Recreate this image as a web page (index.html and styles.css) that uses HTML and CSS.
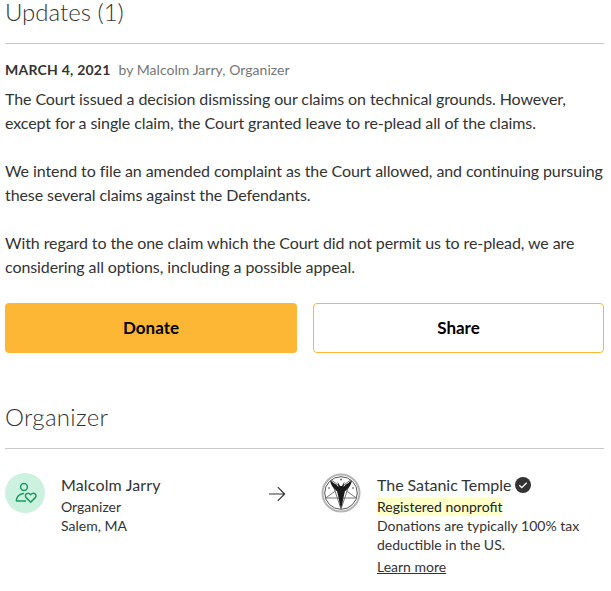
FILE: index.html
```html
<!DOCTYPE html>
<html lang="en">
<head>
<meta charset="utf-8">
<title>Updates</title>
<link rel="stylesheet" href="styles.css">
</head>
<body>
<main class="page">
  <h2 class="heading updates-heading">Updates (1)</h2>
  <div class="update-meta"><strong class="date">MARCH 4, 2021</strong><span class="by">by Malcolm Jarry, Organizer</span></div>
  <div class="update-body">
    <p>The Court issued a decision dismissing our claims on technical grounds. However, except for a single claim, the Court granted leave to re-plead all of the claims.</p>
    <p>We intend to file an amended complaint as the Court allowed, and continuing pursuing these several claims against the Defendants.</p>
    <p>With regard to the one claim which the Court did not permit us to re-plead, we are considering all options, including a possible appeal.</p>
  </div>
  <div class="actions">
    <a class="btn btn-primary">Donate</a>
    <a class="btn btn-secondary">Share</a>
  </div>
  <h2 class="heading organizer-heading">Organizer</h2>
  <section class="organizer">
    <div class="person">
      <div class="avatar">
        <svg width="22" height="22" viewBox="0 0 22 22" fill="none" stroke="#1b9a62" stroke-width="1.5" stroke-linecap="round" stroke-linejoin="round">
          <circle cx="9" cy="5" r="3.4"/>
          <path d="M10.5 19H2.2c-.6 0-1-.5-.8-1.1C2 14.500 4.700 12 8.500 11.500"/>
          <path d="M15.700 20.200l-4.300-4.300c-1.300-1.300-1.300-3 0-4 1.200-.9 2.900-.7 4.300.9 1.400-1.600 3.100-1.800 4.300-.9 1.300 1 1.300 2.700 0 4z"/>
        </svg>
      </div>
      <div class="info">
        <div class="name name-person">Malcolm Jarry</div>
        <div class="small">Organizer</div>
        <div class="small">Salem, MA</div>
      </div>
    </div>
    <div class="arrow">
      <svg width="18" height="16" viewBox="0 0 18 16" fill="none" stroke="#333" stroke-width="1.2">
        <path d="M1 8h15.500M9.800 1.200 16.600 8l-6.800 6.800"/>
      </svg>
    </div>
    <div class="person charity">
      <div class="logo">
        <svg width="40" height="40" viewBox="0 0 40 40">
          <circle cx="20" cy="20" r="18.500" fill="#fff" stroke="#b5b5b5" stroke-width="2"/>
          <circle cx="20" cy="20" r="16.300" fill="none" stroke="#555" stroke-width="1"/>
          <path d="M20 36 10.300 7 35.300 25H4.700L29.700 7z" fill="none" stroke="#777" stroke-width="1"/>
          <path d="M9 7.500c3 2.500 6 3 8.500 6.500L16.500 8.500l2.500 4.500h2l2.500-4.500-1 5.500C25 10.500 28 10 31 7.500c-1 5-3.500 8-7 10.500l-1.200 5-1.800 9-1 3.500-1-3.500-1.800-9-1.200-5C12.500 15.500 10 12.500 9 7.500z" fill="#1a1a1a"/>
          <circle cx="20" cy="6.500" r="1" fill="#666"/>
          <circle cx="8" cy="15" r="1" fill="#888"/>
          <circle cx="32" cy="15" r="1" fill="#888"/>
        </svg>
      </div>
      <div class="info">
        <div class="name name-org">The Satanic Temple<svg class="check" width="16" height="16" viewBox="0 0 16 16"><circle cx="8" cy="8" r="8" fill="#333"/><path d="M4.300 8.300l2.500 2.400 4.900-5" fill="none" stroke="#fff" stroke-width="1.300"/></svg></div>
        <div class="small"><span class="highlight">Registered nonprofit</span></div>
        <div class="small">Donations are typically 100% tax<br>deductible in the US.</div>
        <a class="learn">Learn more</a>
      </div>
    </div>
  </section>
</main>
</body>
</html>
```
FILE: styles.css
```css
html, body { margin: 0; padding: 0; background: #fff; }
body { font-family: Lato, "Noto Sans", sans-serif; color: #333; overflow: hidden; }
.page { padding: 0 7px 0 5px; height: 591px; box-sizing: border-box; }
.heading { margin: 0; font-weight: 300; font-size: 24px; line-height: 24px; color: #333; border-bottom: 1px solid #c8c8c8; }
.updates-heading { padding-bottom: 19px; }
.update-meta { margin-top: 16px; line-height: 20px; font-size: 14px; display: flex; align-items: baseline; }
.date { font-weight: 700; font-size: 14px; letter-spacing: 0.23px; margin-right: 8px; }
.by { color: #767676; font-size: 14px; letter-spacing: 0.04px; }
.update-body { margin-top: 7px; font-size: 16px; line-height: 24px; letter-spacing: -0.09px; }
.update-body p { margin: 0 0 24px; }
.update-body p:last-child { margin-bottom: 0; }
.actions { display: flex; gap: 16px; margin-top: 24px; }
.btn { height: 50px; padding-bottom: 2px; box-sizing: border-box; display: flex; align-items: center; justify-content: center; border-radius: 4px; font-size: 17px; font-weight: 700; color: #000; }
.btn-primary { background: #feb734; flex: 0 0 292px; }
.btn-secondary { background: #fff; border: 1px solid #feb734; flex: 1; }
.organizer-heading { margin-top: 52px; padding-bottom: 19px; letter-spacing: 0.3px; }
.organizer { display: flex; margin-top: 24px; }
.person { display: flex; width: 263px; }
.avatar { width: 40px; height: 40px; border-radius: 50%; background: #cdf1df; display: flex; align-items: center; justify-content: center; flex: none; margin-right: 16px; }
.avatar svg { margin-left: 2px; }
.arrow { width: 53px; padding-top: 13px; flex: none; }
.arrow svg { display: block; }
.logo { width: 40px; height: 40px; flex: none; margin-right: 16px; }
.logo svg { display: block; }
.charity { width: auto; flex: 1; }
.name { font-size: 16px; line-height: 24px; display: flex; align-items: center; }
.name-person { letter-spacing: 0.15px; }
.name-org { letter-spacing: -0.05px; }
.check { margin-left: 4px; }
.small { font-size: 14px; line-height: 19px; }
.highlight { background: #ffffc8; box-shadow: 0 0 3px #ffffc8; color: #222; }
.learn { display: inline-block; margin-top: 3px; font-size: 14px; line-height: 19px; text-decoration: underline; color: #333; }
```
